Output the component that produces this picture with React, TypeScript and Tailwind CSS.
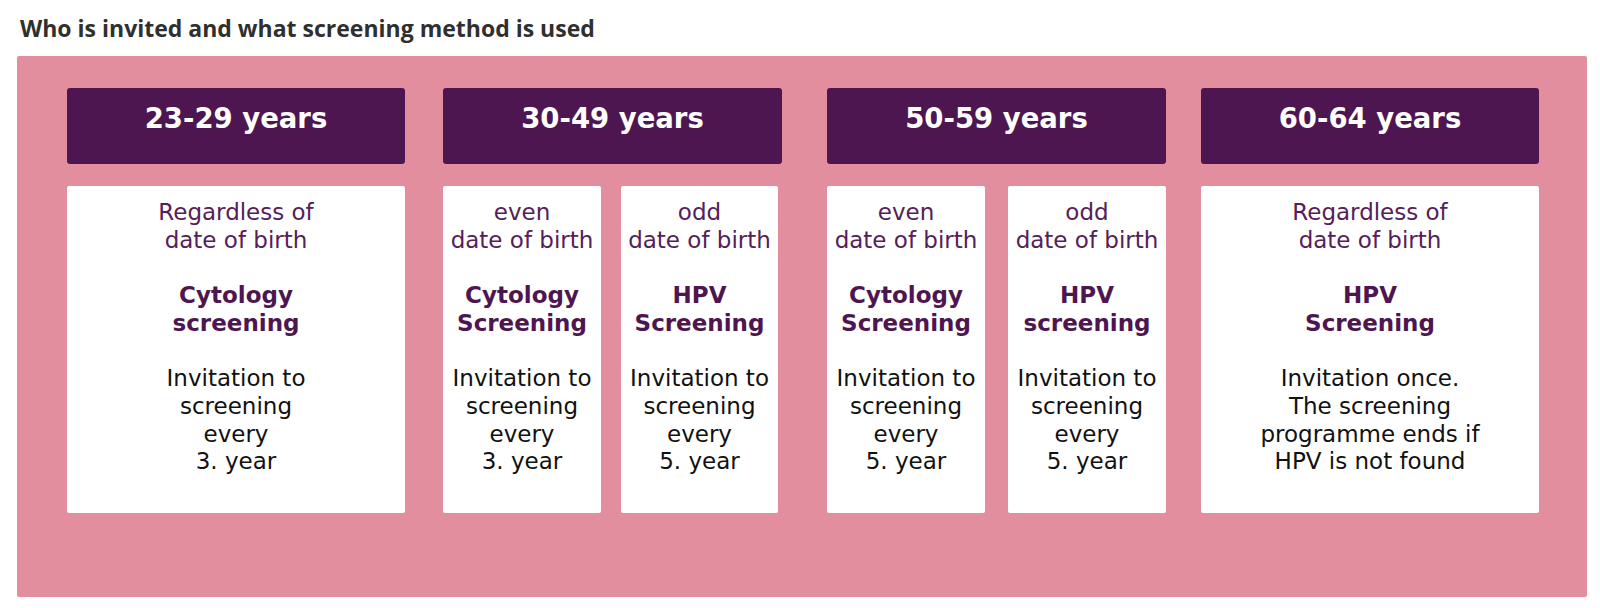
import React from "react";

const body = { fontFamily: '"DejaVu Sans", Verdana, sans-serif' };

function Header({ label }: { label: string }) {
  return (
    <div
      className="h-[76px] rounded-[3px] bg-[#4e1650] pt-[15px] text-center text-[27.5px] font-bold leading-[31px] text-white"
      style={body}
    >
      {label}
    </div>
  );
}

function Card({
  who,
  method,
  freq,
  className,
}: {
  who: string[];
  method: string[];
  freq: string[];
  className: string;
}) {
  return (
    <div
      className={`h-[327px] rounded-[2px] bg-white pt-[13px] text-center text-[23px] leading-[27.7px] whitespace-nowrap ${className}`}
      style={body}
    >
      <div className="text-[#55205a]">
        {who.map((l) => (
          <div key={l}>{l}</div>
        ))}
      </div>
      <div className="mt-[27.7px] font-bold text-[#4e1650]">
        {method.map((l) => (
          <div key={l}>{l}</div>
        ))}
      </div>
      <div className="mt-[27.7px] text-[#111111]">
        {freq.map((l) => (
          <div key={l}>{l}</div>
        ))}
      </div>
    </div>
  );
}

export default function App() {
  return (
    <div className="h-[608px] w-[1600px] bg-white">
      <div
        className="pl-[20px] pt-[14px] text-[23px] font-bold leading-[28px] text-[#2f2f2f]"
        style={{ fontFamily: '"Open Sans", Lato, sans-serif' }}
      >
        Who is invited and what screening method is used
      </div>
      <div className="ml-[17px] mt-[14px] h-[541px] w-[1570px] rounded-[2px] bg-[#e28e9e] pl-[50px] pt-[32px]">
        <div className="flex">
          <div className="w-[338px]">
            <Header label="23-29 years" />
            <div className="mt-[22px]">
              <Card
                className="w-[338px]"
                who={["Regardless of", "date of birth"]}
                method={["Cytology", "screening"]}
                freq={["Invitation to", "screening", "every", "3. year"]}
              />
            </div>
          </div>
          <div className="ml-[38px] w-[339px]">
            <Header label="30-49 years" />
            <div className="mt-[22px] flex gap-[20px]">
              <Card
                className="w-[158px]"
                who={["even", "date of birth"]}
                method={["Cytology", "Screening"]}
                freq={["Invitation to", "screening", "every", "3. year"]}
              />
              <Card
                className="w-[157px]"
                who={["odd", "date of birth"]}
                method={["HPV", "Screening"]}
                freq={["Invitation to", "screening", "every", "5. year"]}
              />
            </div>
          </div>
          <div className="ml-[45px] w-[339px]">
            <Header label="50-59 years" />
            <div className="mt-[22px] flex gap-[23px]">
              <Card
                className="w-[158px]"
                who={["even", "date of birth"]}
                method={["Cytology", "Screening"]}
                freq={["Invitation to", "screening", "every", "5. year"]}
              />
              <Card
                className="w-[158px]"
                who={["odd", "date of birth"]}
                method={["HPV", "screening"]}
                freq={["Invitation to", "screening", "every", "5. year"]}
              />
            </div>
          </div>
          <div className="ml-[35px] w-[338px]">
            <Header label="60-64 years" />
            <div className="mt-[22px]">
              <Card
                className="w-[338px]"
                who={["Regardless of", "date of birth"]}
                method={["HPV", "Screening"]}
                freq={["Invitation once.", "The screening", "programme ends if", "HPV is not found"]}
              />
            </div>
          </div>
        </div>
      </div>
    </div>
  );
}
